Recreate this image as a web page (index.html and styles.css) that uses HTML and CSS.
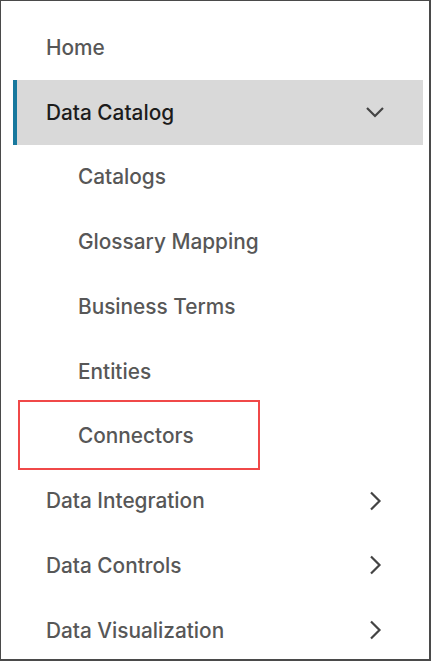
FILE: index.html
```html
<!DOCTYPE html>
<html lang="en">
<head>
<meta charset="utf-8">
<title>Navigation</title>
<link rel="stylesheet" href="styles.css">
</head>
<body>
<div class="frame">
  <nav class="nav">
    <div class="item top"><span class="label">Home</span></div>
    <div class="item top active">
      <span class="label">Data Catalog</span>
      <svg class="chev" width="20" height="12" viewBox="0 0 20 12"><path d="M2 2 L10 10 L18 2" fill="none" stroke="#444" stroke-width="2.2"/></svg>
    </div>
    <div class="item sub"><span class="label">Catalogs</span></div>
    <div class="item sub"><span class="label">Glossary Mapping</span></div>
    <div class="item sub"><span class="label">Business Terms</span></div>
    <div class="item sub"><span class="label">Entities</span></div>
    <div class="item sub marked"><span class="label">Connectors</span><span class="mark"></span></div>
    <div class="item top">
      <span class="label">Data Integration</span>
      <svg class="chev" width="20" height="20" viewBox="0 0 20 20"><path d="M6 1.5 L14.5 10 L6 18.5" fill="none" stroke="#444" stroke-width="2.2"/></svg>
    </div>
    <div class="item top">
      <span class="label">Data Controls</span>
      <svg class="chev" width="20" height="20" viewBox="0 0 20 20"><path d="M6 1.5 L14.5 10 L6 18.5" fill="none" stroke="#444" stroke-width="2.2"/></svg>
    </div>
    <div class="item top">
      <span class="label">Data Visualization</span>
      <svg class="chev" width="20" height="20" viewBox="0 0 20 20"><path d="M6 1.5 L14.5 10 L6 18.5" fill="none" stroke="#444" stroke-width="2.2"/></svg>
    </div>
  </nav>
</div>
</body>
</html>
```
FILE: styles.css
```css
html, body {
  margin: 0;
  padding: 0;
  background: #ffffff;
}
.frame {
  width: 431px;
  height: 661px;
  box-sizing: border-box;
  border: 1px solid #4a4a4a;
  border-right-width: 2px;
  border-bottom-width: 2px;
  overflow: hidden;
}
.nav {
  display: flex;
  flex-direction: column;
  padding: 14px 6px 0 12px;
  font-family: Inter, Lato, sans-serif;
  font-size: 20.8px;
  font-weight: 500;
}
.item {
  position: relative;
  height: 64.75px;
  display: flex;
  align-items: center;
  justify-content: space-between;
  border-left: 4px solid transparent;
  box-sizing: border-box;
  padding-right: 38px;
  color: #575757;
}
.item.top { padding-left: 29px; }
.item.sub { padding-left: 61px; }
.item.active {
  background: #d9d9d9;
  border-left-color: #18799e;
  color: #1c1c1c;
}
.chev { display: block; }
.mark {
  position: absolute;
  left: 1px;
  top: -4px;
  width: 242px;
  height: 70px;
  box-sizing: border-box;
  border: 2px solid #f04848;
}
```
